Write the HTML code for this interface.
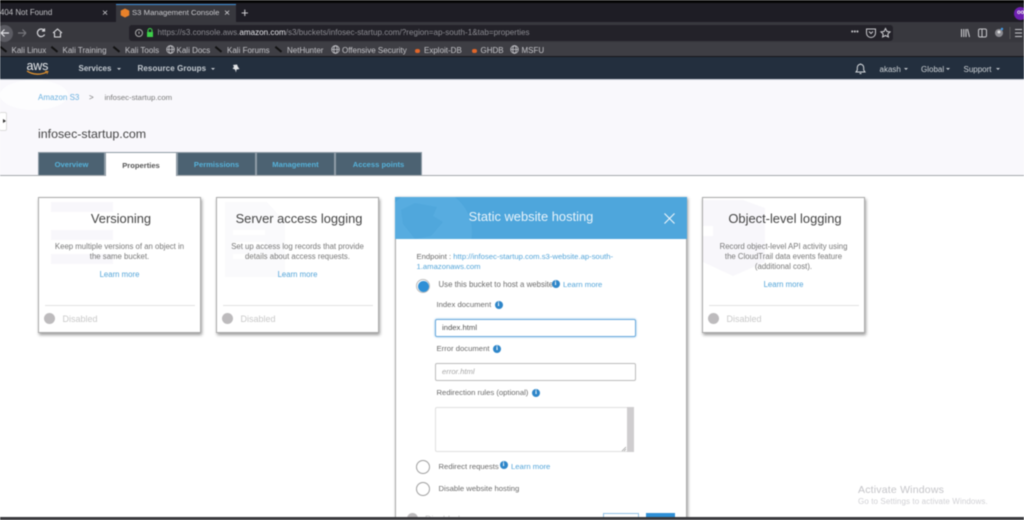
<!DOCTYPE html>
<html><head><meta charset="utf-8"><style>
html,body{margin:0;padding:0;width:1024px;height:520px;overflow:hidden;background:#fff}
body{font-family:"Liberation Sans",sans-serif;position:relative}
#w{position:absolute;left:0;top:0;width:1024px;height:520px;overflow:hidden;filter:blur(.45px)}
.t{position:absolute;white-space:nowrap;line-height:1}
.card{position:absolute;top:197px;background:#fff;border:1px solid #a9a9a9;box-shadow:1px 2px 3px rgba(0,0,0,.4);box-sizing:border-box;height:136px}
.card .h{position:absolute;left:3px;right:0;top:14px;text-align:center;font-size:12.9px;color:#444;line-height:1.1;white-space:nowrap}
.card .d{position:absolute;left:12px;right:12px;top:43.5px;text-align:center;font-size:7.8px;line-height:10px;color:#777}
.card .l{position:absolute;left:0;right:0;text-align:center;font-size:7.8px;color:#54a5d9;line-height:10px}
.card .hr{position:absolute;left:6px;right:5px;top:107px;height:1px;background:#e2e2e2}
.card .c{position:absolute;left:5px;top:115px;width:11px;height:11px;border-radius:50%;background:#bdbbbd}
.card .s{position:absolute;left:23.5px;top:115.5px;font-size:9px;color:#c9c9c9;line-height:10px}
.tab{position:absolute;top:152px;height:23px;background:#4c6272;color:#56b2da;font-size:7.6px;font-weight:bold;text-align:center;line-height:24px;box-sizing:border-box;border:1px solid #8f9ca6;border-bottom:0}
.bm{position:absolute;top:45.5px;font-size:8px;color:#c4c4c8;white-space:nowrap;line-height:10px}
.tk{position:absolute;top:46px;width:8px;height:2px;background:#111;transform:rotate(40deg);transform-origin:left top}
.nv{position:absolute;font-size:8px;color:#cdd2d6;white-space:nowrap;line-height:10px}
.car{position:absolute;width:0;height:0;border-left:2.5px solid transparent;border-right:2.5px solid transparent;border-top:2.5px solid #c5cbd0}
.lb{position:absolute;font-size:7.7px;color:#6b6b6b;white-space:nowrap;line-height:10px}
.i{position:absolute;width:8px;height:8px;border-radius:50%;background:#2e86c9;color:#fff;font:bold 6.5px/8px "Liberation Serif",serif;text-align:center}
.r{position:absolute;left:416px;width:12px;height:12px;border:1px solid #a0a0a0;border-radius:50%;background:#fff}
.lk{position:absolute;font-size:7.7px;color:#54a5d9;white-space:nowrap;line-height:10px}
</style></head><body><div id="w">
<!-- browser chrome -->
<div style="position:absolute;left:0;top:0;width:1024px;height:3px;background:#050505"></div>
<div style="position:absolute;left:0;top:3px;width:1024px;height:19px;background:#1e1d25"></div>
<div style="position:absolute;left:0;top:22px;width:1024px;height:20px;background:#38383e"></div>
<div style="position:absolute;left:0;top:42px;width:1024px;height:15px;background:#3e3e44"></div>
<div style="position:absolute;left:0;top:56px;width:1024px;height:1px;background:#17171b"></div>
<div style="position:absolute;left:116px;top:4px;width:120px;height:18px;background:#38383e;border-top:1px solid #3f8fd6;box-sizing:border-box"></div>
<div class="t" style="left:0;top:9px;font-size:7.9px;color:#c0c0c4">404 Not Found</div>
<div class="t" style="left:102px;top:7.5px;font-size:10.5px;color:#c8c8cc">×</div>
<svg style="position:absolute;left:120px;top:8px" width="10" height="10" viewBox="0 0 10 10"><path d="M5 .5L9.3 2.6V7.4L5 9.5L.7 7.4V2.6Z" fill="#e8812a"/></svg>
<div class="t" style="left:132px;top:9px;font-size:7.75px;color:#c8c8cc">S3 Management Console</div>
<div class="t" style="left:224px;top:7.5px;font-size:10.5px;color:#d0d0d4">×</div>
<div class="t" style="left:241px;top:6px;font-size:13px;color:#d8d8dc">+</div>
<div style="position:absolute;left:-4px;top:25px;width:17px;height:17px;border-radius:50%;background:#5b5b62"></div>
<svg style="position:absolute;left:0;top:26px" width="70" height="14" viewBox="0 0 70 14" fill="none"><path d="M1 7H9M1 7L4.5 3.5M1 7L4.5 10.5" stroke="#e2e2e6" stroke-width="1.2"/><path d="M18 7H26M26 7L22.5 3.5M26 7L22.5 10.5" stroke="#77777c" stroke-width="1.2"/><path d="M44 4.2A3.8 3.8 0 1 0 44.6 8.5M44.5 2.5V5H42" stroke="#dcdce0" stroke-width="1.2"/><path d="M53 7L57.5 3L62 7M54.5 6.5V11H60.5V6.5" stroke="#dcdce0" stroke-width="1.1"/></svg>
<div style="position:absolute;left:129px;top:25px;width:764px;height:16px;background:#232229;border-radius:3px"></div>
<svg style="position:absolute;left:134px;top:27px" width="20" height="12" viewBox="0 0 20 12" fill="none"><circle cx="5" cy="6" r="3.5" stroke="#aaa" stroke-width="1"/><path d="M5 4.5V7" stroke="#aaa"/><rect x="13" y="5" width="6" height="5" fill="#3ecf4a"/><path d="M14 5V3.5A2 2 0 0 1 18 3.5V5" stroke="#3ecf4a" stroke-width="1.1"/></svg>
<div class="t" style="left:157.5px;top:29px;font-size:8.1px;color:#8b8b91">https://s3.console.aws.<span style="color:#e8e8ec">amazon.com</span>/s3/buckets/infosec-startup.com/?region=ap-south-1&amp;tab=properties</div>
<div class="t" style="left:851px;top:29px;font-size:7px;font-weight:bold;color:#c0c0c4;letter-spacing:.2px">•••</div>
<svg style="position:absolute;left:865px;top:26px" width="32" height="14" viewBox="0 0 32 14" fill="none"><path d="M1.5 3H10.5V7A4.5 4.5 0 0 1 1.5 7Z" stroke="#c8c8cc" stroke-width="1"/><path d="M4 5.5L6 7.5L8 5.5" stroke="#c8c8cc"/><path d="M20.5 2.5L22 5.5L25 5.9L22.8 8L23.4 11L20.5 9.5L17.6 11L18.2 8L16 5.9L19 5.5Z" stroke="#d0d0d4" stroke-width="1"/></svg>
<svg style="position:absolute;left:960px;top:26px" width="64" height="14" viewBox="0 0 64 14" fill="none"><path d="M1.5 3V11M3.8 3V11M6 3V11M7.5 3L9.5 11" stroke="#c8c8cc" stroke-width="1.1"/><rect x="18.5" y="3" width="8" height="8" rx="1.5" stroke="#c8c8cc"/><path d="M22 3V11" stroke="#c8c8cc"/><circle cx="39" cy="7" r="4" fill="#8a8a90"/><circle cx="39" cy="6" r="1.5" fill="#ddd"/><circle cx="42" cy="3" r="1.2" fill="#3f9be8"/><path d="M50 1V13" stroke="#55555a"/><path d="M55 3.5H62M55 7H62M55 10.5H62" stroke="#c8c8cc" stroke-width="1.1"/></svg>
<div style="position:absolute;left:1014px;top:7px;width:13px;height:13px;border-radius:50%;background:#6d1fb0"></div>
<div class="t" style="left:1017px;top:10px;font-size:6px;font-weight:bold;color:#eee">oo</div>
<!-- bookmarks -->
<div class="tk" style="left:1px"></div><div class="bm" style="left:11.5px">Kali Linux</div>
<div class="tk" style="left:52px"></div><div class="bm" style="left:62.5px">Kali Training</div>
<div class="tk" style="left:114px"></div><div class="bm" style="left:125px">Kali Tools</div>
<svg style="position:absolute;left:166px;top:45px" width="9" height="9" viewBox="0 0 9 9" fill="none" stroke="#c4c4c8" stroke-width=".8"><circle cx="4.5" cy="4.5" r="3.8"/><ellipse cx="4.5" cy="4.5" rx="1.7" ry="3.8"/><path d="M.7 4.5H8.3"/></svg>
<div class="bm" style="left:176.5px">Kali Docs</div>
<div class="tk" style="left:216px"></div><div class="bm" style="left:227px">Kali Forums</div>
<div class="tk" style="left:276px"></div><div class="bm" style="left:287px">NetHunter</div>
<svg style="position:absolute;left:331px;top:45px" width="9" height="9" viewBox="0 0 9 9" fill="none" stroke="#c4c4c8" stroke-width=".8"><circle cx="4.5" cy="4.5" r="3.8"/><ellipse cx="4.5" cy="4.5" rx="1.7" ry="3.8"/><path d="M.7 4.5H8.3"/></svg>
<div class="bm" style="left:342px">Offensive Security</div>
<div style="position:absolute;left:415px;top:48.5px;width:5px;height:4px;border-radius:2px;background:#e0662a"></div>
<div class="bm" style="left:424px">Exploit-DB</div>
<div style="position:absolute;left:471.5px;top:48.5px;width:5px;height:4px;border-radius:2px;background:#e0662a"></div>
<div class="bm" style="left:480.5px">GHDB</div>
<svg style="position:absolute;left:510px;top:45px" width="9" height="9" viewBox="0 0 9 9" fill="none" stroke="#c4c4c8" stroke-width=".8"><circle cx="4.5" cy="4.5" r="3.8"/><ellipse cx="4.5" cy="4.5" rx="1.7" ry="3.8"/><path d="M.7 4.5H8.3"/></svg>
<div class="bm" style="left:521.5px">MSFU</div>
<!-- aws nav -->
<div style="position:absolute;left:0;top:57px;width:1024px;height:22px;background:#232f3e"></div>
<div class="t" style="left:26.5px;top:59.5px;font-size:12.5px;color:#e8eaec;letter-spacing:-.2px">aws</div>
<svg style="position:absolute;left:26px;top:70px" width="24" height="6" viewBox="0 0 24 6" fill="none"><path d="M1 1C7 5 15 5 21 2" stroke="#e8962e" stroke-width="1.2"/><path d="M19 1.2L22 1.5L21 4" stroke="#e8962e" stroke-width=".8"/></svg>
<div class="nv" style="left:78.5px;top:63.5px;font-weight:bold;color:#c6ccd2">Services</div><div class="car" style="left:117px;top:68px"></div>
<div class="nv" style="left:137.5px;top:63.5px;font-weight:bold;color:#c6ccd2;letter-spacing:.1px">Resource Groups</div><div class="car" style="left:211px;top:68px"></div>
<svg style="position:absolute;left:232px;top:64px" width="8" height="9" viewBox="0 0 8 9"><path d="M1 1L5 .5L6 3L7.5 5L4.5 5.5L4 8.5L3 5.5L.5 4.5L2 3Z" fill="#e4e6e8"/></svg>
<svg style="position:absolute;left:855px;top:63px" width="11" height="12" viewBox="0 0 11 12" fill="none"><path d="M1 9H10L8.7 7V4.5A3.2 3.2 0 0 0 2.3 4.5V7ZM4.5 10.5H6.5M5.5 1V.5" stroke="#d5d9dd" stroke-width="1"/></svg>
<div class="nv" style="left:879.5px;top:64.5px">akash</div><div class="car" style="left:904px;top:68px"></div>
<div class="nv" style="left:921px;top:64.5px">Global</div><div class="car" style="left:946px;top:68px"></div>
<div class="nv" style="left:963.5px;top:64.5px">Support</div><div class="car" style="left:996px;top:68px"></div>
<!-- page -->
<div style="position:absolute;left:0;top:79px;width:1024px;height:1px;background:#c9cdd6"></div>
<div style="position:absolute;left:0;top:80px;width:1024px;height:95px;background:#f9f8fc"></div>
<div style="position:absolute;left:0;top:80px;width:68px;height:30px;border-radius:50%/50%;background:#fdfdfe"></div>
<div class="t" style="left:38px;top:94px;font-size:8px;color:#6db2e0">Amazon S3</div>
<div class="t" style="left:89px;top:94px;font-size:8px;color:#777">&gt;</div>
<div class="t" style="left:104.5px;top:94px;font-size:7.75px;color:#7a7a7a">infosec-startup.com</div>
<div style="position:absolute;left:-1px;top:112px;width:8px;height:19px;background:#fff;border:1px solid #ddd;border-radius:2px;box-sizing:border-box"></div>
<div style="position:absolute;left:3px;top:119px;width:0;height:0;border-top:2.5px solid transparent;border-bottom:2.5px solid transparent;border-left:3px solid #333"></div>
<div class="t" style="left:38px;top:127.5px;font-size:12.4px;color:#444">infosec-startup.com</div>
<div style="position:absolute;left:0;top:175px;width:1024px;height:1px;background:#a5a9ad"></div>
<div class="tab" style="left:38px;width:67px">Overview</div>
<div style="position:absolute;left:105px;top:152px;width:72px;height:24px;background:#fff;border:1px solid #8f9ca6;border-bottom:0;box-sizing:border-box;text-align:center;font-size:7.6px;font-weight:bold;color:#555;line-height:25px">Properties</div>
<div class="tab" style="left:177px;width:79px">Permissions</div>
<div class="tab" style="left:256px;width:79px">Management</div>
<div class="tab" style="left:335px;width:87px">Access points</div>
<!-- cards -->
<div class="card" style="left:38px;width:163px">
<svg style="position:absolute;left:12px;top:4px" width="62" height="62"><path d="M0 0H62V10H0ZM0 28H62V38H0ZM0 52H62V62H0Z" fill="#f8f7fb"/></svg>
<div class="h">Versioning</div><div class="d">Keep multiple versions of an object in the same bucket.</div><div class="l" style="top:72px">Learn more</div><div class="hr"></div><div class="c"></div><div class="s">Disabled</div></div>
<div class="card" style="left:216px;width:163px">
<svg style="position:absolute;left:8px;top:4px" width="60" height="75"><path d="M0 0H42L60 20V75H0Z" fill="#fafafc"/><path d="M8 28H40V33H8ZM8 40H40V45H8ZM8 52H40V57H8Z" fill="#fff"/></svg>
<div class="h">Server access logging</div><div class="d">Set up access log records that provide details about access requests.</div><div class="l" style="top:72px">Learn more</div><div class="hr"></div><div class="c"></div><div class="s">Disabled</div></div>
<div class="card" style="left:702px;width:163px">
<svg style="position:absolute;left:0;top:2px" width="62" height="76"><path d="M0 0H40L62 8V62L30 76L0 62Z" fill="#f8f7fb"/><path d="M0 26H10V36H0Z" fill="#fff"/></svg>
<div class="h">Object-level logging</div><div class="d">Record object-level API activity using the CloudTrail data events feature (additional cost).</div><div class="l" style="top:82px">Learn more</div><div class="hr"></div><div class="c"></div><div class="s">Disabled</div></div>
<!-- hosting card -->
<div style="position:absolute;left:395px;top:197px;width:292px;height:325px;background:#fff;border:1px solid #a9a9a9;border-top:0;box-sizing:border-box;box-shadow:1px 1px 3px rgba(0,0,0,.4)"></div>
<div style="position:absolute;left:395px;top:197px;width:292px;height:42px;background:#4ea6dc;overflow:hidden">
<div style="position:absolute;left:-11px;top:-9px;width:88px;height:88px;border-radius:50%;background:#57ace0"></div>
<svg style="position:absolute;left:4px;top:5px" width="50" height="37"><path d="M2 8L16 1L38 5L34 14L44 20L32 34L16 37L4 22Z" fill="#50a7dc"/></svg>
</div>
<div class="t" style="left:395px;width:272px;text-align:center;top:211px;font-size:12.9px;color:#e8f3fa">Static website hosting</div>
<svg style="position:absolute;left:664px;top:213px" width="11" height="11" fill="none"><path d="M.5 .5L10.5 10.5M10.5 .5L.5 10.5" stroke="#eef6fb" stroke-width="1.1"/></svg>
<div class="lb" style="left:416.5px;top:252px">Endpoint : <span style="color:#54a5d9">http://infosec-startup.com.s3-website.ap-south-</span></div>
<div class="lk" style="left:416.5px;top:262px">1.amazonaws.com</div>
<div class="r" style="top:279px;border-color:#bbb"></div>
<div style="position:absolute;left:417.5px;top:280.5px;width:11px;height:11px;border-radius:50%;background:#2e8fd6"></div>
<div class="lb" style="left:438.5px;top:280px;font-size:7.85px">Use this bucket to host a website</div>
<div class="i" style="left:551.5px;top:279.5px">i</div>
<div class="lk" style="left:563px;top:280px">Learn more</div>
<div class="lb" style="left:436.5px;top:300px">Index document</div><div class="i" style="left:494.5px;top:300.5px">i</div>
<div style="position:absolute;left:435px;top:319px;width:201px;height:18px;border:1px solid #6aa9dc;border-radius:2px;box-sizing:border-box;box-shadow:0 0 2px #8cc0e8;font-size:7.7px;line-height:16px;padding-left:6px;color:#555">index.html</div>
<div class="lb" style="left:436.5px;top:344px">Error document</div><div class="i" style="left:493px;top:344.5px">i</div>
<div style="position:absolute;left:435px;top:363px;width:201px;height:18px;border:1px solid #bdbdbd;border-radius:2px;box-sizing:border-box;font:italic 7.7px/16px 'Liberation Sans',sans-serif;padding-left:6px;color:#a8a8a8">error.html</div>
<div class="lb" style="left:436.5px;top:388px">Redirection rules (optional)</div><div class="i" style="left:532px;top:388.5px">i</div>
<div style="position:absolute;left:435px;top:407px;width:199px;height:45px;border:1px solid #e0e0e0;border-radius:2px;box-sizing:border-box"></div>
<div style="position:absolute;left:627px;top:407px;width:7px;height:45px;background:#cfcdcf"></div>
<svg style="position:absolute;left:621px;top:446px" width="6" height="6" fill="none"><path d="M1 5L5 1M3 5L5 3" stroke="#999" stroke-width=".7"/></svg>
<div class="r" style="top:460px"></div>
<div class="lb" style="left:438.5px;top:461.5px">Redirect requests</div><div class="i" style="left:499.5px;top:461px">i</div>
<div class="lk" style="left:511px;top:461.5px">Learn more</div>
<div class="r" style="top:482px"></div>
<div class="lb" style="left:438.5px;top:483.5px">Disable website hosting</div>
<div style="position:absolute;left:407px;top:513px;width:11px;height:11px;border-radius:50%;background:#bdbbbd"></div>
<div class="t" style="left:425px;top:515px;font-size:9px;color:#c9c9c9">Disabled</div>
<div style="position:absolute;left:603px;top:513px;width:36px;height:10px;border:1px solid #8fc0e4;box-sizing:border-box"></div>
<div style="position:absolute;left:646px;top:513px;width:29px;height:10px;background:#2e8fd6"></div>
<div class="t" style="left:858px;top:485px;font-size:10.5px;color:#c4c4c8;letter-spacing:.2px">Activate Windows</div>
<div class="t" style="left:858px;top:498px;font-size:8px;color:#d0d0d4;letter-spacing:.1px">Go to Settings to activate Windows.</div>
<div style="position:absolute;left:0;top:517px;width:1024px;height:3px;background:#3a3a3e"></div>
</div></body></html>
